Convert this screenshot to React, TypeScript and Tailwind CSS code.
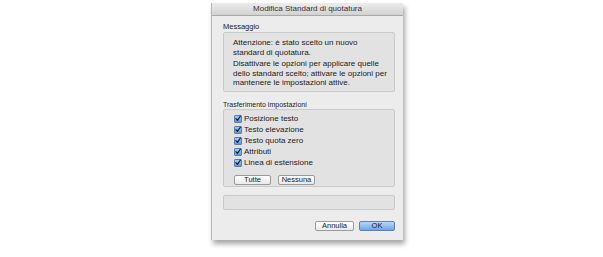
export default function App() {
  const options = [
    "Posizione testo",
    "Testo elevazione",
    "Testo quota zero",
    "Attributi",
    "Linea di estensione",
  ];

  return (
    <div
      className="w-[603px] h-[257px] bg-white pt-[3px] pl-[211px] text-[#1a1a1a]"
      style={{ fontFamily: '"Liberation Sans", Arial, sans-serif' }}
    >
      <div className="w-[192px] h-[237px] bg-[#ececec] flex flex-col shadow-[2px_4px_5px_rgba(0,0,0,0.35)] border-l border-[#b8b8b8]">
        {/* title bar */}
        <div className="h-[13px] bg-gradient-to-b from-[#ececec] to-[#d2d2d2] border-b border-[#a8a8a8] flex items-center justify-center text-[8px] leading-none text-[#333]">
          Modifica Standard di quotatura
        </div>

        <div className="flex flex-col px-[11px]">
          <div className="mt-[6px] h-[10px] text-[7.5px] leading-[10px]">Messaggio</div>
          <div className="w-[172px] h-[60px] bg-[#e2e2e2] border border-[#c9c9c9] rounded-[2px] pl-[9px] pr-[2px] pt-[5px] text-[8px] leading-[9.5px] whitespace-nowrap">
            <p>
              Attenzione: è stato scelto un nuovo
              <br />
              standard di quotatura.
            </p>
            <p className="mt-[2px]">
              Disattivare le opzioni per applicare quelle
              <br />
              dello standard scelto; attivare le opzioni per
              <br />
              mantenere le impostazioni attive.
            </p>
          </div>

          <div className="mt-[8px] h-[9px] text-[7px] leading-[9px]">Trasferimento impostazioni</div>
          <div className="w-[172px] h-[78px] bg-[#e2e2e2] border border-[#c9c9c9] rounded-[2px] pl-[10px] pt-[3px] text-[8px]">
            {options.map((o) => (
              <div key={o} className="h-[11px] flex items-center gap-[2px]">
                <span className="w-[8px] h-[8px] rounded-[1px] border border-[#5a7fb0] bg-gradient-to-b from-[#a9cbf2] to-[#5c95d8] flex items-center justify-center">
                  <svg width="7" height="7" viewBox="0 0 8 8" aria-hidden="true">
                    <path d="M1.2 4.2 L3.2 6.4 L7.2 0.8" fill="none" stroke="#10223a" strokeWidth="1.5" strokeLinecap="round" strokeLinejoin="round" />
                  </svg>
                </span>
                <span className="leading-none">{o}</span>
              </div>
            ))}
            <div className="mt-[7px] flex gap-[7px]">
              <button type="button" className="w-[37px] h-[10px] bg-gradient-to-b from-white to-[#eaeaea] border border-[#9a9a9a] rounded-[2px] text-[7.5px] leading-none">
                Tutte
              </button>
              <button type="button" className="w-[37px] h-[10px] bg-gradient-to-b from-white to-[#eaeaea] border border-[#9a9a9a] rounded-[2px] text-[7.5px] leading-none">
                Nessuna
              </button>
            </div>
          </div>

          <div className="mt-[8px] w-[172px] h-[15px] bg-[#e2e2e2] border border-[#c9c9c9] rounded-[2px]" />

          <div className="mt-[11px] flex justify-end gap-[5px] w-[172px]">
            <button type="button" className="w-[39px] h-[10px] bg-gradient-to-b from-white to-[#eaeaea] border border-[#9a9a9a] rounded-[2px] text-[7.5px] leading-none">
              Annulla
            </button>
            <button type="button" className="w-[36px] h-[10px] bg-gradient-to-b from-[#b9d6f6] to-[#6fa6e6] border border-[#5a80b4] rounded-[2px] text-[7.5px] leading-none">
              OK
            </button>
          </div>
        </div>
      </div>
    </div>
  );
}
